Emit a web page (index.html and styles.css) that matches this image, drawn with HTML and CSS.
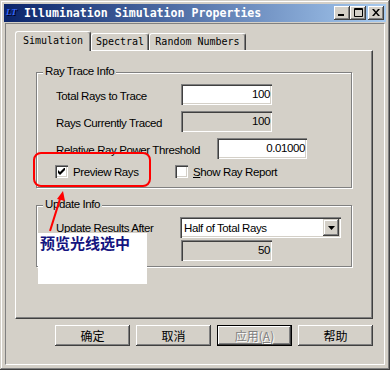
FILE: index.html
```html
<!DOCTYPE html>
<html>
   <head>
      <title>Illumination Simulation Properties</title>
      <link rel="stylesheet" href="styles.css">
   </head>
   <body>
      <div class="window">
         <div class="titlebar">
            <span class="app-icon">LT</span>
            <span class="title">Illumination Simulation Properties</span>
            <div class="caption-btns">
               <span class="cap-btn">
                  <svg width="8" height="7" viewBox="0 0 8 7"><rect x="0" y="5" width="6" height="2" fill="#000"/></svg>
               </span>
               <span class="cap-btn">
                  <svg width="9" height="9" viewBox="0 0 9 9"><path d="M0.5 0.5h8v8h-8z M0.5 1.5h8" fill="none" stroke="#000"/></svg>
               </span>
               <span class="cap-btn cap-close">
                  <svg width="8" height="7" viewBox="0 0 8 7"><path d="M0 0h2l2 2.5 2-2.5h2l-3 3.5 3 3.5h-2l-2-2.5-2 2.5h-2l3-3.5z" fill="#000"/></svg>
               </span>
            </div>
         </div>
         <div class="client">
            <div class="tabs">
               <div class="tab tab-active">Simulation</div>
               <div class="tab tab-spectral">Spectral</div>
               <div class="tab tab-random">Random Numbers</div>
            </div>
            <div class="panel">
               <div class="group group-trace">
                  <span class="legend">Ray Trace Info</span>
                  <div class="row">
                     <span class="label">Total Rays to Trace</span>
                     <div class="edit">100</div>
                  </div>
                  <div class="row">
                     <span class="label">Rays Currently Traced</span>
                     <div class="edit edit-disabled">100</div>
                  </div>
                  <div class="row">
                     <span class="label label-wide">Relative Ray Power Threshold</span>
                     <div class="edit edit-narrow">0.01000</div>
                  </div>
                  <div class="check-row">
                     <div class="check check-first">
                        <span class="check-box">
                           <svg width="7" height="7" viewBox="0 0 7 7"><path d="M0 2v3l2 2 5-5v-3l-5 5z" fill="#000"/></svg>
                        </span>
                        <span>Preview Rays</span>
                     </div>
                     <div class="check">
                        <span class="check-box"></span>
                        <span><u>S</u>how Ray Report</span>
                     </div>
                  </div>
               </div>
               <div class="group group-update">
                  <span class="legend">Update Info</span>
                  <div class="row">
                     <span class="label label-combo">Update Results After</span>
                     <div class="combo">
                        <span class="combo-text">Half of Total Rays</span>
                        <span class="combo-btn">
                           <svg width="7" height="4" viewBox="0 0 7 4"><path d="M0 0h7l-3.5 4z" fill="#000"/></svg>
                        </span>
                     </div>
                  </div>
                  <div class="row row-tight">
                     <span class="label"></span>
                     <div class="edit edit-disabled">50</div>
                  </div>
               </div>
            </div>
            <div class="buttons">
               <span class="btn">确定</span>
               <span class="btn">取消</span>
               <span class="btn btn-default btn-disabled">应用(<u>A</u>)</span>
               <span class="btn">帮助</span>
            </div>
         </div>

         <!-- annotation drawn over the dialog -->
         <div class="note-ring"></div>
         <svg class="note-arrow" width="30" height="50" viewBox="0 0 30 50">
            <line x1="10" y1="46" x2="20" y2="14" stroke="#f00" stroke-width="2"/>
            <polygon points="23,6 25,16 17,14" fill="#f00"/>
         </svg>
         <div class="note">预览光线选中</div>
      </div>
   </body>
</html>
```

FILE: styles.css
```css
body {
   margin: 0;
}
.window {
   position: relative;
   width: 390px;
   height: 370px;
   box-sizing: border-box;
   padding: 4px;
   background: #d4d0c8;
   box-shadow: inset -1px -1px #404040, inset 1px 1px #d4d0c8, inset -2px -2px #808080, inset 2px 2px #fff;
   font-family: "Liberation Sans", Arial, sans-serif;
   font-size: 11.5px;
   letter-spacing: -0.4px;
   color: #000;
}
.titlebar {
   display: flex;
   align-items: center;
   height: 18px;
   padding: 0 2px 0 2px;
   background: linear-gradient(to right, #0a246a, #a6caf0);
}
.app-icon {
   width: 14px;
   margin-right: 4px;
   margin-top: -2px;
   font-family: "Liberation Serif", serif;
   font-style: italic;
   font-weight: bold;
   font-size: 9px;
   letter-spacing: 0;
   color: #3868ff;
   text-shadow: 1px 1px #000018;
}
.title {
   flex: 1;
   font-family: "DejaVu Sans Mono", monospace;
   font-weight: bold;
   font-size: 11.6px;
   letter-spacing: 0;
   color: #fff;
}
.caption-btns {
   display: flex;
   margin-top: -1px;
}
.cap-btn {
   display: flex;
   align-items: center;
   justify-content: center;
   width: 16px;
   height: 14px;
   background: #d4d0c8;
   box-shadow: inset -1px -1px #404040, inset 1px 1px #fff, inset -2px -2px #808080;
}
.cap-close {
   margin-left: 2px;
}
.client {
   height: 342px;
   box-sizing: border-box;
   margin: 1px 1px 0;
   padding: 7px 0 0 9px;
   border: 1px solid;
   border-color: #808080 #fff #fff #808080;
}
.tabs {
   display: flex;
   align-items: flex-end;
   height: 19px;
}
.tab {
   box-sizing: border-box;
   height: 17px;
   border: 1px solid #fff;
   border-bottom: none;
   border-right-color: #404040;
   border-radius: 3px 3px 0 0;
   box-shadow: inset -1px 0 #808080;
   font-family: "DejaVu Sans Mono", monospace;
   font-size: 10px;
   letter-spacing: 0;
   line-height: 15px;
   text-align: center;
}
.tab-active {
   position: relative;
   z-index: 1;
   width: 76px;
   height: 20px;
   margin-bottom: -1px;
   background: #d4d0c8;
   line-height: 17px;
}
.tab-spectral {
   width: 58px;
}
.tab-random {
   width: 97px;
}
.panel {
   width: 358px;
   height: 269px;
   box-sizing: border-box;
   padding-top: 21px;
   padding-left: 20px;
   border: 1px solid;
   border-color: #fff #404040 #404040 #fff;
   box-shadow: inset -1px -1px #808080;
}
.group {
   position: relative;
   width: 316px;
   box-sizing: border-box;
   padding: 11px 0 0 19px;
   border: 1px solid #808080;
   box-shadow: inset 1px 1px #fff, 1px 1px #fff;
}
.group-trace {
   height: 116px;
}
.group-update {
   height: 62px;
   margin-top: 17px;
}
.legend {
   position: absolute;
   top: -8px;
   left: 6px;
   padding: 0 2px;
   line-height: 13px;
   background: #d4d0c8;
}
.row {
   display: flex;
   align-items: center;
   height: 21px;
   margin-bottom: 6px;
}
.row-tight {
   margin-top: -4px;
}
.label {
   width: 125px;
   flex-shrink: 0;
   padding-top: 2px;
}
.label-wide {
   width: 161px;
}
.label-combo {
   width: 124px;
   padding-top: 0;
   line-height: 12px;
}
.edit {
   width: 91px;
   height: 21px;
   box-sizing: border-box;
   padding-right: 2px;
   background: #fff;
   box-shadow: inset 1px 1px #808080, inset 2px 2px #404040, inset -1px -1px #fff, inset -2px -2px #d4d0c8;
   line-height: 20px;
   text-align: right;
}
.edit-disabled {
   background: #d4d0c8;
}
.edit-narrow {
   width: 90px;
}
.combo {
   display: flex;
   align-items: center;
   width: 161px;
   height: 21px;
   box-sizing: border-box;
   padding: 2px;
   background: #fff;
   box-shadow: inset 1px 1px #808080, inset 2px 2px #404040, inset -1px -1px #fff, inset -2px -2px #d4d0c8;
}
.combo-text {
   flex: 1;
   padding-left: 2px;
}
.combo-btn {
   display: flex;
   align-items: center;
   justify-content: center;
   width: 16px;
   height: 17px;
   background: #d4d0c8;
   box-shadow: inset -1px -1px #404040, inset 1px 1px #d4d0c8, inset -2px -2px #808080, inset 2px 2px #fff;
}
.check-row {
   display: flex;
   align-items: center;
   height: 13px;
   margin-top: 1px;
   margin-left: -1px;
}
.check {
   display: flex;
   align-items: center;
   gap: 5px;
}
.check-first {
   width: 120px;
}
.check-box {
   display: flex;
   align-items: center;
   justify-content: center;
   width: 13px;
   height: 13px;
   box-sizing: border-box;
   background: #fff;
   box-shadow: inset 1px 1px #808080, inset 2px 2px #404040, inset -1px -1px #fff, inset -2px -2px #d4d0c8;
}
.buttons {
   display: flex;
   justify-content: flex-end;
   gap: 6px;
   width: 358px;
   margin-top: 6px;
}
.btn {
   width: 75px;
   height: 21px;
   box-sizing: border-box;
   background: #d4d0c8;
   box-shadow: inset -1px -1px #404040, inset 1px 1px #fff, inset -2px -2px #808080;
   font-family: "Noto Sans CJK SC", sans-serif;
   font-size: 12px;
   letter-spacing: 0;
   line-height: 21px;
   text-align: center;
}
.btn-default {
   border: 1px solid #000;
   line-height: 19px;
}
.btn-disabled {
   color: #808080;
   text-shadow: 1px 1px #fff;
}
.note-ring {
   position: absolute;
   left: 33px;
   top: 152px;
   width: 118px;
   height: 35px;
   box-sizing: border-box;
   border: 2px solid #f00;
   border-radius: 8px;
}
.note-arrow {
   position: absolute;
   left: 40px;
   top: 185px;
}
.note {
   position: absolute;
   left: 38px;
   top: 233px;
   width: 109px;
   height: 51px;
   box-sizing: border-box;
   padding: 1px 0 0 2px;
   background: #fff;
   font-family: "Noto Sans CJK SC", sans-serif;
   font-weight: bold;
   font-size: 15px;
   letter-spacing: 0;
   line-height: 18px;
   color: #141480;
}
```
